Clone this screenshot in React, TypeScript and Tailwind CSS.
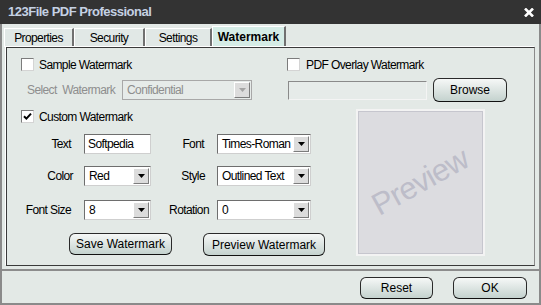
import React from 'react';

function Checkbox({ checked }: { checked?: boolean }) {
  return (
    <span className="flex h-[13px] w-[13px] shrink-0 items-center justify-center border border-t-[#7c7c7c] border-l-[#7c7c7c] border-b-[#d4d4d4] border-r-[#d4d4d4] bg-white">
      {checked && (
        <svg width="9" height="9" viewBox="0 0 9 9">
          <path d="M1 4.2 L3.4 6.6 L8 1.6" stroke="#000" strokeWidth="2" fill="none" />
        </svg>
      )}
    </span>
  );
}

function DropArrow({ disabled }: { disabled?: boolean }) {
  return (
    <span className="flex w-[16px] shrink-0 items-center justify-center border border-t-white border-l-white border-b-[#7c7c7c] border-r-[#7c7c7c] bg-[#dcdcdc]">
      <svg width="7" height="4" viewBox="0 0 7 4">
        <path d="M0 0h7L3.5 4z" fill={disabled ? '#a4a4a4' : '#000'} />
      </svg>
    </span>
  );
}

function Select({ value, className, disabled }: { value: string; className: string; disabled?: boolean }) {
  return (
    <div
      className={`flex h-[20px] items-stretch border p-[1px] ${
        disabled
          ? 'border-[#a8a8a8] bg-[#e6ebe9] text-[#8e8e8e]'
          : 'border-t-[#6e6e6e] border-l-[#6e6e6e] border-b-[#cfcfcf] border-r-[#cfcfcf] bg-white'
      } ${className}`}
    >
      <span className="flex-1 pl-[3px] leading-[16px]">{value}</span>
      <DropArrow disabled={disabled} />
    </div>
  );
}

function Btn({ children, className }: { children: React.ReactNode; className: string }) {
  return (
    <button className={`flex items-center justify-center rounded-[6px] border border-[#2a2a2a] border-b-[#111] bg-linear-to-b from-[#f6f8f7] to-[#c4d2ce] text-[12px] tracking-normal text-black ${className}`}>
      {children}
    </button>
  );
}

function Tab({ label, active, className }: { label: string; active?: boolean; className: string }) {
  return (
    <div
      className={`flex items-center justify-center border-l border-t border-l-white border-t-white border-r-2 border-r-[#707070] ${
        active ? 'h-[21px] bg-[#d5ece6] font-bold tracking-normal' : 'h-[19px] bg-[#e1e8e6]'
      } ${className}`}
    >
      {label}
    </div>
  );
}

export default function App() {
  return (
    <div className="flex h-[305px] w-[541px] flex-col overflow-hidden bg-[#e3e9e6] font-['Liberation_Sans',Arial,sans-serif] text-[12px] tracking-[-0.6px] text-black">
      <div className="flex h-[24px] shrink-0 items-center justify-between bg-[#333333] pl-[8px] pr-[7px]">
        <span className="text-[13px] font-bold tracking-[-0.5px] text-[#c5d1e3]">123File PDF Professional</span>
        <svg width="10" height="9" viewBox="0 0 10 9">
          <path d="M1 0.5 L9 8.5 M9 0.5 L1 8.5" stroke="#fff" strokeWidth="2.6" />
        </svg>
      </div>

      <div className="flex flex-1 flex-col border-x-2 border-b-2 border-[#8a8a8a]">
        <div className="flex h-[23px] items-end pl-[2px]">
          <Tab label="Properties" className="w-[70px]" />
          <Tab label="Security" className="w-[71px]" />
          <Tab label="Settings" className="w-[67px]" />
          <Tab label="Watermark" active className="w-[74px]" />
        </div>

        <div className="ml-[4px] h-[219px] w-[529px] border border-[#3a3a3a] border-r-[#8a8a8a] pl-[14px] pt-[10px] shadow-[-1px_-1px_0_#ffffff]">
          <div className="flex h-[13px] items-center">
            <label className="flex w-[266px] items-center gap-[5px]">
              <Checkbox />
              Sample Watermark
            </label>
            <label className="flex items-center gap-[6px]">
              <Checkbox />
              PDF Overlay Watermark
            </label>
          </div>

          <div className="mt-[7px] flex h-[24px] items-center">
            <div className="flex w-[266px] items-center">
              <span className="ml-[6px] w-[95px] text-[#8e8e8e]">Select&nbsp; Watermark</span>
              <Select value="Confidential" disabled className="w-[130px]" />
            </div>
            <div className="ml-[1px] h-[19px] w-[139px] border border-t-[#8a8a8a] border-l-[#8a8a8a] border-b-[#f4f4f4] border-r-[#f4f4f4] bg-[#e6ebe9]" />
            <Btn className="ml-[6px] h-[24px] w-[74px]">Browse</Btn>
          </div>

          <div className="mt-[7px] flex">
            <div className="flex w-[335px] flex-col">
              <label className="mt-[1px] flex h-[13px] items-center gap-[5px]">
                <Checkbox checked />
                Custom Watermark
              </label>

              <div className="mt-[11px] grid grid-cols-[63px_67px_66px_94px] items-center gap-y-[12px]">
                <span className="pr-[13px] text-right">Text</span>
                <div className="flex h-[20px] items-center border border-t-[#6e6e6e] border-l-[#6e6e6e] border-b-[#cfcfcf] border-r-[#cfcfcf] bg-white pl-[3px]">
                  Softpedia
                </div>
                <span className="pr-[13px] text-right">Font</span>
                <Select value="Times-Roman" className="w-[94px]" />

                <span className="pr-[11px] text-right">Color</span>
                <Select value="Red" className="w-[67px]" />
                <span className="pr-[12px] text-right">Style</span>
                <Select value="Outlined Text" className="w-[94px]" />

                <span className="mt-[2px] pr-[13px] text-right">Font Size</span>
                <Select value="8" className="mt-[2px] w-[67px]" />
                <span className="mt-[2px] pr-[8px] text-right">Rotation</span>
                <Select value="0" className="mt-[2px] w-[94px]" />
              </div>

              <div className="mt-[13px] flex">
                <Btn className="ml-[48px] h-[22px] w-[103px]">Save Watermark</Btn>
                <Btn className="ml-[31px] h-[23px] w-[122px]">Preview Watermark</Btn>
              </div>
            </div>

            <div className="flex h-[147px] w-[129px] items-center justify-center overflow-hidden border-2 border-[#f3f3f3] bg-[#dcdce0] outline outline-1 -outline-offset-3 outline-[#c6c6ce]">
              <span className="-rotate-[29deg] text-[31px] tracking-[-0.8px] text-[#bdbdc9]">Preview</span>
            </div>
          </div>
        </div>

        <div className="mt-[3px] h-[2px] bg-[#8c8c8c]" />

        <div className="flex justify-end gap-[20px] pr-[12px] pt-[6px]">
          <Btn className="h-[22px] w-[73px]">Reset</Btn>
          <Btn className="h-[22px] w-[74px]">OK</Btn>
        </div>
      </div>
    </div>
  );
}
